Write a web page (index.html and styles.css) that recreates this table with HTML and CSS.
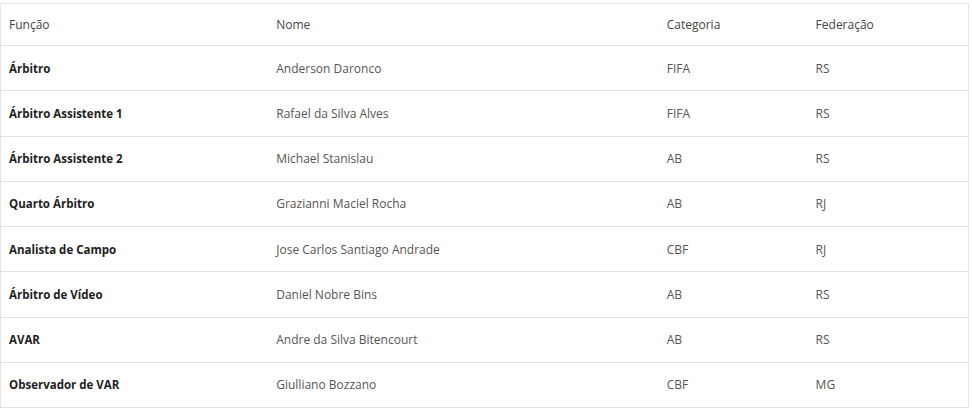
FILE: index.html
```html
<!DOCTYPE html>
<html lang="pt">
<head>
<meta charset="utf-8">
<title>Arbitragem</title>
<link rel="stylesheet" href="styles.css">
</head>
<body>
<table class="refs">
  <colgroup>
    <col class="c1"><col class="c2"><col class="c3"><col class="c4">
  </colgroup>
  <thead>
    <tr><th>Função</th><th>Nome</th><th>Categoria</th><th>Federação</th></tr>
  </thead>
  <tbody>
    <tr><td class="role">Árbitro</td><td>Anderson Daronco</td><td>FIFA</td><td>RS</td></tr>
    <tr><td class="role">Árbitro Assistente 1</td><td>Rafael da Silva Alves</td><td>FIFA</td><td>RS</td></tr>
    <tr><td class="role">Árbitro Assistente 2</td><td>Michael Stanislau</td><td>AB</td><td>RS</td></tr>
    <tr><td class="role">Quarto Árbitro</td><td>Grazianni Maciel Rocha</td><td>AB</td><td>RJ</td></tr>
    <tr><td class="role">Analista de Campo</td><td>Jose Carlos Santiago Andrade</td><td>CBF</td><td>RJ</td></tr>
    <tr><td class="role">Árbitro de Vídeo</td><td>Daniel Nobre Bins</td><td>AB</td><td>RS</td></tr>
    <tr><td class="role">AVAR</td><td>Andre da Silva Bitencourt</td><td>AB</td><td>RS</td></tr>
    <tr><td class="role">Observador de VAR</td><td>Giulliano Bozzano</td><td>CBF</td><td>MG</td></tr>
  </tbody>
</table>
</body>
</html>
```
FILE: styles.css
```css
html, body {
  margin: 0;
  padding: 0;
  background: #fff;
}
body {
  padding-top: 3px;
  font-family: "Open Sans", "Noto Sans", sans-serif;
  font-size: 12px;
  color: #555;
}
.refs {
  width: 969px;
  border-collapse: collapse;
  border: 1px solid #e6e6e6;
}
.c1 { width: 268px; }
.c2 { width: 391px; }
.c3 { width: 149px; }
.c4 { width: 161px; }
.refs th,
.refs td {
  text-align: left;
  padding: 0 8px;
  font-weight: 400;
  border-bottom: 1px solid #e0e0e0;
}
.refs th {
  height: 41px;
  color: #444;
}
.refs td {
  height: 44.25px;
}
.refs td.role {
  font-weight: 700;
  font-size: 11.5px;
  color: #222;
}
```
